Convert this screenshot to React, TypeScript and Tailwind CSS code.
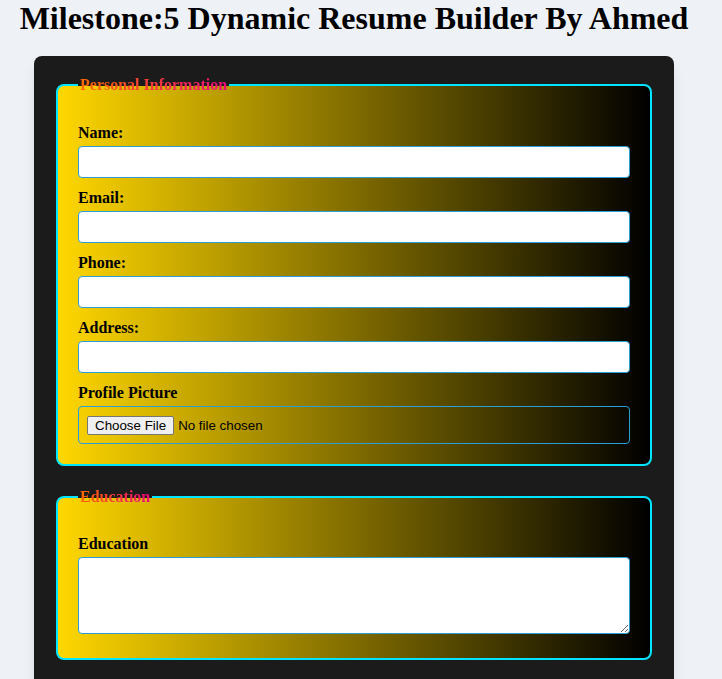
import * as React from "react";

const serif = "font-['Liberation_Serif','Times_New_Roman',serif]";

const Legend = ({text}: {text: string}) => (
    <legend className={`px-[2px] text-[16px] leading-[18px] font-bold ${serif}`}>
        <span className="bg-[linear-gradient(to_right,#ff6a00,#ee0979)] bg-clip-text text-transparent">{text}</span>
    </legend>
);

const Field = ({label}: {label: string}) => (
    <div className="mb-[11px]">
        <label className={`block h-[18px] leading-[18px] mb-[4px] text-[16px] font-bold text-black ${serif}`}>{label}</label>
        <input type="text"
               className="block w-full h-8 bg-white border border-[#2a9fd6] rounded-[4px] px-2 outline-none"/>
    </div>
);

export default function App() {
    return (
        <div className="min-h-screen bg-[#eef2f7]">
            <div className="w-[708px] pb-10">
                <h1 className={`text-center text-[32px] leading-[36px] font-bold text-black ${serif}`}>
                    Milestone:5 Dynamic Resume Builder By Ahmed
                </h1>

                <div className="mt-[20px] mx-auto w-[640px] bg-[#1b1b1b] rounded-lg shadow-lg px-[22px] pt-[20px] pb-[30px]">
                    <fieldset className="mb-[22px] border-2 border-[#00e5ff] rounded-lg bg-[linear-gradient(to_right,#ffd700,#000)] px-[20px] pt-[30px] pb-[20px]">
                        <Legend text="Personal Information"/>
                        <Field label="Name:"/>
                        <Field label="Email:"/>
                        <Field label="Phone:"/>
                        <Field label="Address:"/>
                        <div>
                            <label className={`block h-[18px] leading-[18px] mb-[4px] text-[16px] font-bold text-black ${serif}`}>Profile Picture</label>
                            <input type="file"
                                   className="block w-full h-[38px] px-2 py-[9px] leading-[15px] border border-[#2a9fd6] rounded-[4px] text-[13.333px] text-black font-['Liberation_Sans',Arial,sans-serif]
                                   file:bg-[#efefef] file:border file:border-[#767676] file:rounded-[2px] file:px-[7px] file:py-[1px] file:mr-[4px] file:leading-[15px] file:text-black"/>
                        </div>
                    </fieldset>

                    <fieldset className="border-2 border-[#00e5ff] rounded-lg bg-[linear-gradient(to_right,#ffd700,#000)] px-[20px] pt-[29px] pb-[24px]">
                        <Legend text="Education"/>
                        <label className={`block h-[18px] leading-[18px] mb-[4px] text-[16px] font-bold text-black ${serif}`}>Education</label>
                        <textarea className="block w-full h-[77px] bg-white border border-[#2a9fd6] rounded-[4px] p-2 outline-none"/>
                    </fieldset>
                </div>
            </div>
        </div>
    );
}
